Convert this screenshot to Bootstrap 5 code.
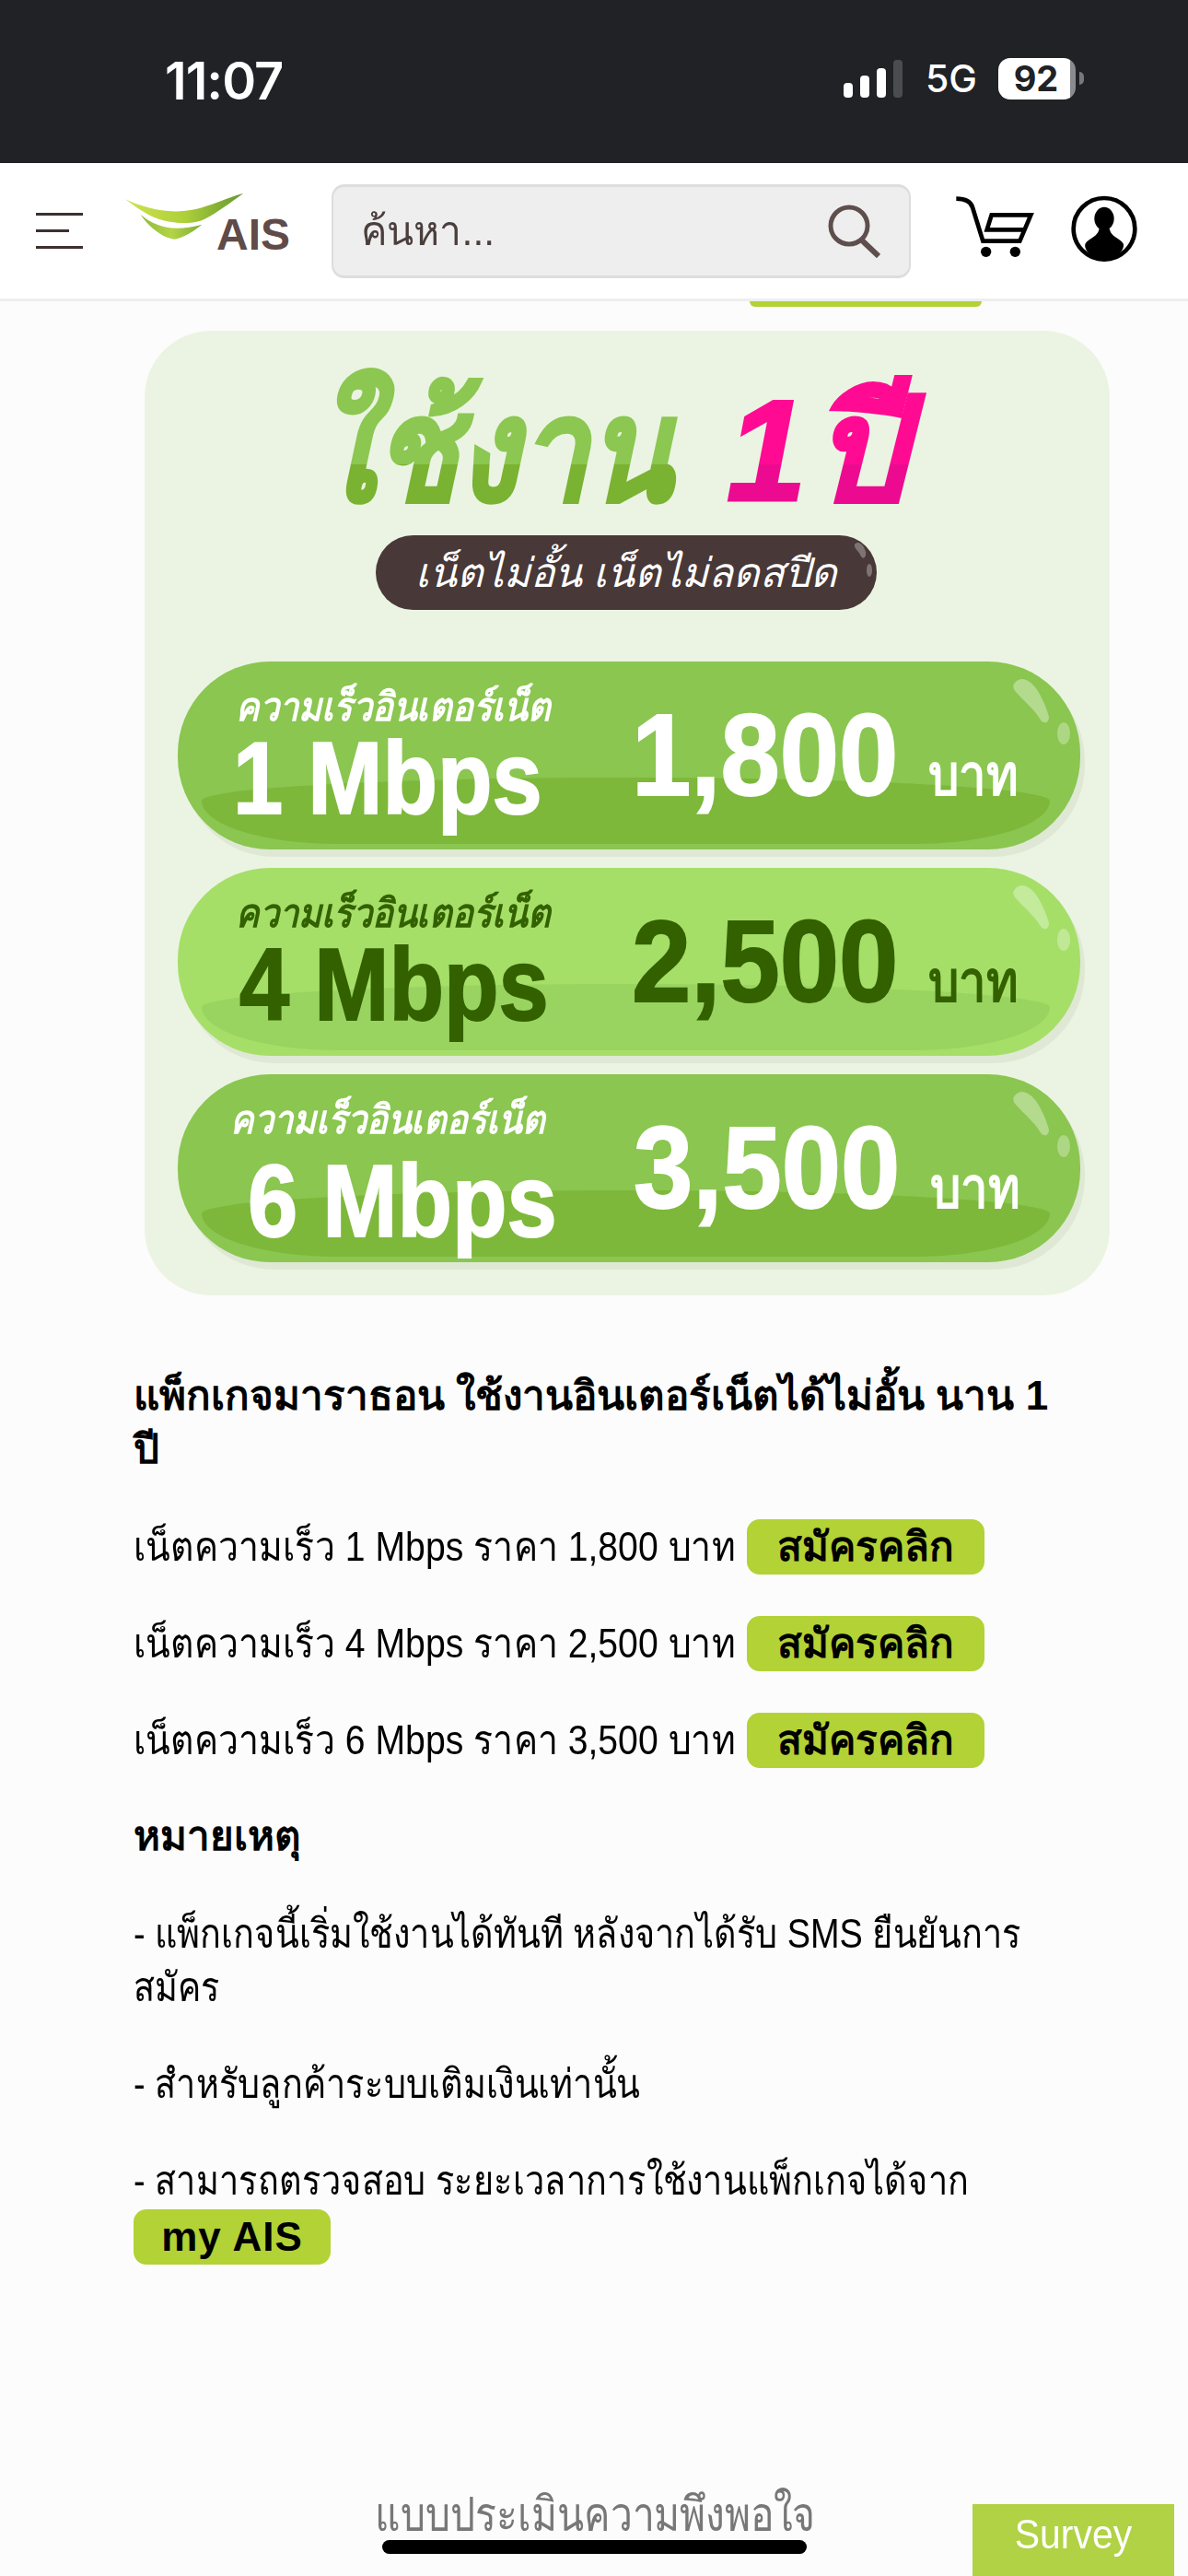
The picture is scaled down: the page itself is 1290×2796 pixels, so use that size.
<!DOCTYPE html>
<html lang="th">
<head>
  <meta charset="UTF-8">
  <meta name="viewport" content="width=device-width, initial-scale=1.0">
  <title>AIS แพ็กเกจมาราธอน</title>
  <link href="https://cdn.jsdelivr.net/npm/bootstrap@5.3.2/dist/css/bootstrap.min.css" rel="stylesheet">
  <style>
    /*---PAGE---*/
    html,body{height:2796px;overflow:hidden}
    body{background:#fcfcfc;color:#000;font-family:"Liberation Sans","Noto Sans",sans-serif;font-size:44px;position:relative}
    /* the reference font is narrower than anything installed */
    .slim{display:inline-block;transform-origin:left center;white-space:nowrap}

    /*---STATUS BAR---*/
    #statusbar{height:177px;background:#212226;color:#fff;padding:60px 113px 0 179px}
    #clock{font:600 56px/56px Inter,"Liberation Sans",sans-serif;letter-spacing:-1px}
    #net{font:500 41px/50px Inter,"Liberation Sans",sans-serif;width:55px;margin:0 24px;white-space:nowrap}
    #batt{width:84px;height:45px;border-radius:13px;background:linear-gradient(90deg,#fff 93%,#8a8b8e 93%);color:#212226;font:700 38px/45px Inter,"Liberation Sans",sans-serif;text-align:center;padding-right:2px}
    #nub{width:5px;height:14px;background:#77787b;border-radius:0 5px 5px 0;margin-left:4px}

    /*---HEADER---*/
    #topbar{height:150px;background:#fff;border-bottom:3px solid #eee;padding:0 45px 0 39px}
    #burger{width:51px;flex:none}
    #burger i{display:block;height:3px;background:#3d302e}
    #burger i+i{margin-top:15px}
    #burger i:nth-child(2){width:36px}
    #logo{width:200px;height:90px;margin:0 0 18px 36px;position:relative;flex:none}
    #logoText{position:absolute;right:11px;top:35px;font:700 48px/46px "Liberation Sans",sans-serif;color:#5f4b49}
    #searchBox{width:629px;height:102px;margin-left:34px;background:#eee;border:2px solid #ddd;border-top-width:3px;border-bottom-width:3px;border-radius:14px;padding:0 31px 0 30px;color:#4a3f3d;flex:none}
    #searchBox .slim{transform:scaleX(.97)}
    #shopIcons{margin-left:auto;margin-bottom:6px}

    /*---CUT OFF BUTTON UNDER HEADER---*/
    #cutBtn{width:252px;height:6px;margin-left:814px;background:#b2d235;border-radius:0 0 14px 14px}

    /*---BANNER---*/
    #banner{width:1048px;height:1047px;margin:26px 0 0 157px;background:#ebf4e2;border-radius:72px;padding:39px 30px 0 36px}
    #bannerTitle{height:183px;font-weight:700;font-style:italic;font-size:156px;line-height:183px;padding-left:134px;word-spacing:-36px;-webkit-text-stroke:3px transparent}
    #bannerTitle .slim{padding:0 30px 0 16px}
    .titleGreen{background:linear-gradient(180deg,#8bc751 0 106px,#7ab232 106px);-webkit-background-clip:text;background-clip:text;color:transparent;transform:scaleX(.86);margin-right:-53px}
    .titlePink{background:linear-gradient(180deg,#ff0a93 0 106px,#ec0b90 106px);-webkit-background-clip:text;background-clip:text;color:transparent}
    #bannerTag{width:544px;height:81px;margin:0 0 56px 215px;background:#483838;border-radius:41px;color:#fff;font-style:italic;font-weight:500;font-size:44px;line-height:81px;text-align:center;position:relative}
    #bannerTag svg{position:absolute;right:4px;top:6px}
    .speedPill{width:980px;height:204px;border-radius:100px;background:#8ac650;box-shadow:5px 8px 0 #dfe8d4;color:#fff;position:relative;margin-bottom:20px;font-weight:700}
    .speedPill.light{background:#a5df68;color:#336100}
    .pillFloor{position:absolute;left:26px;right:33px;top:126px;height:72px;background:#7db83a;border-radius:50% 50% 16% 16%/35% 35% 65% 65%}
    .speedPill.light .pillFloor{background:#9ad460}
    .pillGloss{position:absolute;right:10px;top:18px;width:64px;height:76px}
    .pillLeft,.pillRight{position:relative}
    .pillLeft{width:493px;padding:25px 0 0 63px}
    .pillSpeedLabel{font-style:italic;font-size:43px;line-height:48px;font-weight:600}
    .pillSpeedLabel .slim{transform:scaleX(.885)}
    .pillSpeed{font-size:112px;line-height:96px;margin:6px 0 0 -3px;-webkit-text-stroke:2px currentColor}
    .pillSpeed .slim{transform:scaleX(.87)}
    .pillRight{padding-top:41px}
    .pillPrice{font-size:127px;line-height:120px;width:322px;-webkit-text-stroke:2px currentColor}
    .pillPrice .slim{transform:scaleX(.91)}
    .pillUnit{font-size:62px;line-height:120px}
    .pillUnit .slim{transform:scaleX(.85)}
    .speedPill.light .pillSpeed{margin-left:4px}
    .speedPill.last .pillLeft{padding-left:57px}
    .speedPill.last .pillSpeed{margin:17px 0 0 19px}
    .speedPill.last .pillRight{padding-left:2px}

    /*---ARTICLE---*/
    #article{padding:80px 0 0 145px}
    #article h2{font-size:44px;line-height:58px;font-weight:700;margin:0 0 40px}
    .offerRow{height:60px;margin-bottom:45px;line-height:60px}
    .offerRow:first-of-type{margin-top:47px}
    .offerText{width:666px}
    .offerText .slim{transform:scaleX(.89)}
    #article p .slim{transform:scaleX(.86)}
    .greenTag{display:block;width:258px;height:60px;line-height:60px;background:#b2d235;border-radius:14px;color:#000;font-weight:700;text-align:center;text-decoration:none}
    .greenTag.short{width:214px;margin-top:2px;letter-spacing:1px}
    #article h3{font-size:44px;line-height:58px;font-weight:700;margin:0 0 48px}
    #article p{line-height:58px;margin:0 0 47px}

    /*---BOTTOM OVERLAY---*/
    #surveyText{position:absolute;left:407px;top:2697px;font-size:52px;line-height:64px;color:#777}
    #surveyText .slim{transform:scaleX(.82)}
    #surveyBtn{position:absolute;left:1056px;bottom:0;width:219px;height:78px;background:#b0d244;color:#fff;font-size:44px;line-height:66px;text-align:center}
    #surveyBtn .slim{transform:scaleX(.93);transform-origin:center}
    #homeBar{position:absolute;left:415px;top:2757px;width:461px;height:15px;border-radius:8px;background:#000}
  </style>
</head>
<body>
  <!-- STATUS BAR -->
  <div id="statusbar" class="d-flex align-items-start justify-content-between">
    <span id="clock">11:07</span>
    <div class="d-flex align-items-center">
      <svg width="65" height="41" viewBox="0 0 65 41">
        <rect x="0" y="25" width="10" height="16" rx="4" fill="#fff"/>
        <rect x="18" y="17" width="10" height="24" rx="4" fill="#fff"/>
        <rect x="36" y="9" width="10" height="32" rx="4" fill="#fff"/>
        <rect x="54" y="0" width="10" height="41" rx="4" fill="#4b4c50"/>
      </svg>
      <span id="net">5G</span>
      <div id="batt">92</div>
      <div id="nub"></div>
    </div>
  </div>

  <!-- HEADER -->
  <div id="topbar" class="d-flex align-items-center">
    <div id="burger"><i></i><i></i><i></i></div>
    <div id="logo">
      <svg width="200" height="90" viewBox="0 0 600 270">
        <defs>
          <linearGradient id="swTop" x1="0" y1="0" x2="1" y2="0"><stop offset="0" stop-color="#cfe24e"/><stop offset=".5" stop-color="#aed03a"/><stop offset="1" stop-color="#64982f"/></linearGradient>
          <linearGradient id="swLow" x1="0" y1="0" x2="1" y2="0"><stop offset="0" stop-color="#8dbb3c"/><stop offset=".5" stop-color="#b4d445"/><stop offset="1" stop-color="#7cae38"/></linearGradient>
        </defs>
        <path d="M30 58C90 85 170 110 260 90 320 75 370 50 415 38 370 70 320 110 275 128 220 145 140 130 100 105 70 88 50 72 30 58Z" fill="url(#swTop)"/>
        <path d="M80 108C130 150 190 165 280 140 250 165 215 185 190 188 150 185 100 140 80 108Z" fill="url(#swLow)"/>
      </svg>
      <span id="logoText">AIS</span>
    </div>
    <div id="searchBox" class="d-flex align-items-center justify-content-between">
      <span class="slim">ค้นหา...</span>
      <svg width="58" height="58" viewBox="0 0 58 58" fill="none" stroke="#5e4f4c"><circle cx="24" cy="23" r="20" stroke-width="5"/><path d="M37 38 56 56" stroke-width="6"/></svg>
    </div>
    <svg id="shopIcons" width="215" height="95" viewBox="0 0 645 285">
      <g fill="none" stroke="#000" stroke-width="14">
        <path d="M25 47C55 47 72 55 78 75L112 185H232L268 100H140L125 148H245"/>
        <circle cx="507" cy="145" r="100"/>
      </g>
      <circle cx="122" cy="220" r="17"/><circle cx="217" cy="220" r="17"/>
      <ellipse cx="507" cy="112" rx="32" ry="38"/>
      <path d="M445 195C455 175 490 170 490 145H525C525 170 560 175 570 195 572 210 560 225 545 235 520 246 494 246 470 235 455 225 442 210 445 195Z"/>
    </svg>
  </div>
  <div id="cutBtn"></div>

  <!-- BANNER -->
  <div id="banner">
    <div id="bannerTitle" class="d-flex"><span class="slim titleGreen">ใช้งาน</span><span class="slim titlePink">1 ปี</span></div>
    <div id="bannerTag">เน็ตไม่อั้น เน็ตไม่ลดสปีด
      <svg width="22" height="44" viewBox="0 0 22 44"><path d="M2 4C6-1 12 4 14 12 15 18 11 22 8 15 6 11 1 8 2 4Z" fill="#fff" opacity=".3"/><ellipse cx="18" cy="32" rx="3" ry="7" fill="#fff" opacity=".3"/></svg>
    </div>

    <div class="speedPill d-flex">
      <div class="pillFloor"></div>
      <svg class="pillGloss" viewBox="0 0 64 76"><path d="M3 5C10-3 20 2 28 14 33 22 38 34 40 42 40 50 33 50 30 44 24 34 14 26 5 16 1 12 0 8 3 5Z" fill="#fff" opacity=".35"/><ellipse cx="56" cy="60" rx="7" ry="12" fill="#fff" opacity=".3"/></svg>
      <div class="pillLeft"><div class="pillSpeedLabel"><span class="slim">ความเร็วอินเตอร์เน็ต</span></div><div class="pillSpeed"><span class="slim">1 Mbps</span></div></div>
      <div class="pillRight d-flex align-items-baseline"><div class="pillPrice"><span class="slim">1,800</span></div><div class="pillUnit"><span class="slim">บาท</span></div></div>
    </div>
    <div class="speedPill light d-flex">
      <div class="pillFloor"></div>
      <svg class="pillGloss" viewBox="0 0 64 76"><path d="M3 5C10-3 20 2 28 14 33 22 38 34 40 42 40 50 33 50 30 44 24 34 14 26 5 16 1 12 0 8 3 5Z" fill="#fff" opacity=".35"/><ellipse cx="56" cy="60" rx="7" ry="12" fill="#fff" opacity=".3"/></svg>
      <div class="pillLeft"><div class="pillSpeedLabel"><span class="slim">ความเร็วอินเตอร์เน็ต</span></div><div class="pillSpeed"><span class="slim">4 Mbps</span></div></div>
      <div class="pillRight d-flex align-items-baseline"><div class="pillPrice"><span class="slim">2,500</span></div><div class="pillUnit"><span class="slim">บาท</span></div></div>
    </div>
    <div class="speedPill last d-flex">
      <div class="pillFloor"></div>
      <svg class="pillGloss" viewBox="0 0 64 76"><path d="M3 5C10-3 20 2 28 14 33 22 38 34 40 42 40 50 33 50 30 44 24 34 14 26 5 16 1 12 0 8 3 5Z" fill="#fff" opacity=".35"/><ellipse cx="56" cy="60" rx="7" ry="12" fill="#fff" opacity=".3"/></svg>
      <div class="pillLeft"><div class="pillSpeedLabel"><span class="slim">ความเร็วอินเตอร์เน็ต</span></div><div class="pillSpeed"><span class="slim">6 Mbps</span></div></div>
      <div class="pillRight d-flex align-items-baseline"><div class="pillPrice"><span class="slim">3,500</span></div><div class="pillUnit"><span class="slim">บาท</span></div></div>
    </div>
  </div>

  <!-- ARTICLE -->
  <div id="article">
    <h2>แพ็กเกจมาราธอน ใช้งานอินเตอร์เน็ตได้ไม่อั้น นาน 1<br>ปี</h2>
    <div class="offerRow d-flex"><div class="offerText"><span class="slim">เน็ตความเร็ว 1 Mbps ราคา 1,800 บาท</span></div><a class="greenTag" href="#">สมัครคลิก</a></div>
    <div class="offerRow d-flex"><div class="offerText"><span class="slim">เน็ตความเร็ว 4 Mbps ราคา 2,500 บาท</span></div><a class="greenTag" href="#">สมัครคลิก</a></div>
    <div class="offerRow d-flex"><div class="offerText"><span class="slim">เน็ตความเร็ว 6 Mbps ราคา 3,500 บาท</span></div><a class="greenTag" href="#">สมัครคลิก</a></div>
    <h3>หมายเหตุ</h3>
    <p><span class="slim">- แพ็กเกจนี้เริ่มใช้งานได้ทันที หลังจากได้รับ SMS ยืนยันการ</span><br><span class="slim">สมัคร</span></p>
    <p><span class="slim">- สำหรับลูกค้าระบบเติมเงินเท่านั้น</span></p>
    <p><span class="slim">- สามารถตรวจสอบ ระยะเวลาการใช้งานแพ็กเกจได้จาก</span><br><a class="greenTag short" href="#">my AIS</a></p>
  </div>

  <!-- BOTTOM OVERLAY -->
  <div id="surveyText"><span class="slim">แบบประเมินความพึงพอใจ</span></div>
  <div id="surveyBtn"><span class="slim">Survey</span></div>
  <div id="homeBar"></div>

  <script src="https://cdn.jsdelivr.net/npm/bootstrap@5.3.2/dist/js/bootstrap.bundle.min.js"></script>
</body>
</html>
